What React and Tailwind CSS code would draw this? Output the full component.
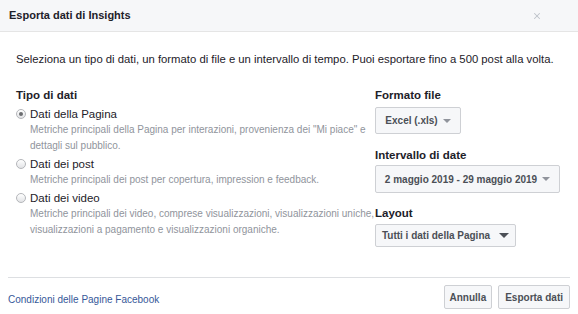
import { X } from 'lucide-react'

const font = { fontFamily: '"Liberation Sans", Arial, sans-serif' }

function Radio({ checked }) {
  return (
    <span className="mt-[3px] flex h-[10px] w-[10px] shrink-0 items-center justify-center rounded-full border border-[#b4b6ba] bg-gradient-to-b from-white to-[#e2e3e6]">
      {checked && <span className="h-[4px] w-[4px] rounded-full bg-[#6b6d70]" />}
    </span>
  )
}

function Option({ checked, label, lines }) {
  return (
    <div className="flex flex-col">
      <div className="flex items-start gap-[4px]">
        <Radio checked={checked} />
        <span className="text-[11.5px] leading-[16px] text-[#1d2129]">{label}</span>
      </div>
      <div className="pl-[14px] text-[10px] leading-[16px] text-[#90949c]">
        {lines.map((line) => (
          <div key={line} className="whitespace-nowrap">{line}</div>
        ))}
      </div>
    </div>
  )
}

function Caret({ big }) {
  return (
    <span
      className={
        big
          ? 'ml-[9px] inline-block h-0 w-0 border-x-[5px] border-t-[5px] border-x-transparent border-t-[#4b4f56]'
          : 'ml-[5px] inline-block h-0 w-0 border-x-[4px] border-t-[4px] border-x-transparent border-t-[#90949c]'
      }
    />
  )
}

function Select({ children, className, big }) {
  return (
    <button
      className={`flex items-center justify-center rounded-[2px] border border-[#ced0d4] bg-[#f6f7f9] text-[10px] font-bold text-[#4b4f56] ${className}`}
    >
      {children}
      <Caret big={big} />
    </button>
  )
}

export default function App() {
  return (
    <div style={font} className="flex h-[314px] w-[578px] flex-col bg-white text-[#1d2129]">
      <div className="flex h-[32px] items-center justify-between border-b border-[#e5e5e5] bg-[#f6f7f9] pl-[9px] pr-[36px]">
        <span className="text-[11px] font-bold">Esporta dati di Insights</span>
        <X size={10} strokeWidth={2.5} className="text-[#bec2c9]" />
      </div>

      <div className="flex-1 px-4 pt-[19px]">
        <p className="text-[11.3px] leading-[16px]">
          Seleziona un tipo di dati, un formato di file e un intervallo di tempo. Puoi esportare fino a 500 post alla volta.
        </p>

        <div className="mt-[20px] flex">
          <div className="flex w-[359px] flex-col">
            <h3 className="text-[11.5px] font-bold leading-[16px]">Tipo di dati</h3>
            <div className="mt-[3px] flex flex-col gap-[2px]">
              <Option
                checked
                label="Dati della Pagina"
                lines={[
                  'Metriche principali della Pagina per interazioni, provenienza dei "Mi piace" e',
                  'dettagli sul pubblico.',
                ]}
              />
              <Option
                label="Dati dei post"
                lines={['Metriche principali dei post per copertura, impression e feedback.']}
              />
              <Option
                label="Dati dei video"
                lines={[
                  'Metriche principali dei video, comprese visualizzazioni, visualizzazioni uniche,',
                  'visualizzazioni a pagamento e visualizzazioni organiche.',
                ]}
              />
            </div>
          </div>

          <div className="flex flex-col">
            <h3 className="text-[11.5px] font-bold leading-[16px]">Formato file</h3>
            <Select className="mt-[4px] h-[27px] w-[86px]">Excel (.xls)</Select>
            <h3 className="mt-[13px] text-[11.5px] font-bold leading-[16px]">Intervallo di date</h3>
            <Select className="mt-[2px] h-[28px] w-[185px]">2 maggio 2019 - 29 maggio 2019</Select>
            <h3 className="mt-[12px] text-[11.5px] font-bold leading-[16px]">Layout</h3>
            <Select big className="mt-[3px] h-[23px] w-[141px]">Tutti i dati della Pagina</Select>
          </div>
        </div>
      </div>

      <div className="mx-[8px] flex items-start justify-between border-t border-[#dddfe2] pb-[5px] pt-[7px]">
        <a className="mt-[9px] text-[10px] leading-[12px] text-[#365899]">Condizioni delle Pagine Facebook</a>
        <div className="flex gap-[6px]">
          <button className="h-[24px] rounded-[2px] border border-[#ced0d4] bg-[#f6f7f9] px-[5px] text-[10px] font-bold text-[#4b4f56]">
            Annulla
          </button>
          <button className="h-[24px] rounded-[2px] border border-[#ced0d4] bg-[#f6f7f9] px-[6px] text-[10px] font-bold text-[#4b4f56]">
            Esporta dati
          </button>
        </div>
      </div>
    </div>
  )
}
